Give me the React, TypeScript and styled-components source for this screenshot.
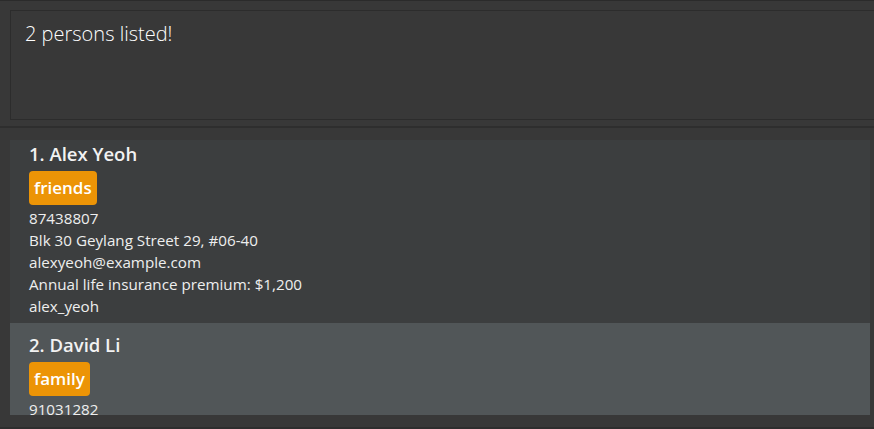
import React from "react";
import styled, { createGlobalStyle } from "styled-components";

const Global = createGlobalStyle`
  html, body { margin: 0; padding: 0; background: #383838; }
  body { width: 874px; height: 429px; overflow: hidden; }
  #root { height: 429px; }
`;

const Page = styled.div`
  height: 429px;
  display: flex;
  flex-direction: column;
  background: #383838;
  border-top: 1px solid #2b2b2b;
  border-bottom: 2px solid #2e2e2e;
  box-sizing: border-box;
  overflow: hidden;
`;

const ResultPane = styled.div`
  padding: 9px 0 6px 10px;
  border-bottom: 2px solid #2e2e2e;
`;

const ResultBox = styled.div`
  border: 1px solid #2c2c2c;
  border-right: none;
  background: #383838;
  padding: 11px 14px;
  box-sizing: border-box;
  height: 110px;
  font-family: "Open Sans", "Noto Sans", sans-serif;
  font-weight: 300;
  font-size: 20px;
  color: #ffffff;
  line-height: 24px;
`;

const ListPane = styled.div`
  flex: 1;
  padding: 12px 4px 12px 10px;
  display: flex;
  flex-direction: column;
  min-height: 0;
`;

const ListViewport = styled.div`
  flex: 1;
  overflow: hidden;
`;

const ListScroll = styled.div`
  margin-top: -8px;
`;

const Card = styled.div<{ $odd?: boolean }>`
  background: ${(p) => (p.$odd ? "#515658" : "#3c3e3f")};
  padding: 8px 19px 6px;
  display: flex;
  flex-direction: column;
  align-items: flex-start;
`;

const Name = styled.div`
  font-family: "Open Sans", "Noto Sans", sans-serif;
  font-weight: 600;
  font-size: 18.5px;
  line-height: 28px;
  color: #f2f2f2;
`;

const Tags = styled.div`
  display: flex;
  gap: 6px;
  margin: 3px 0 2px;
`;

const Tag = styled.span`
  background: #ec9406;
  color: #ffffff;
  border-radius: 4px;
  padding: 0 5px;
  height: 34px;
  line-height: 34px;
  font-family: "Open Sans", "Noto Sans", sans-serif;
  font-weight: 600;
  font-size: 17px;
`;

const Field = styled.div`
  font-family: "Open Sans", "Noto Sans", sans-serif;
  font-size: 15.2px;
  line-height: 22px;
  color: #eeeeee;
  white-space: nowrap;
`;

type Person = {
  name: string;
  tags: string[];
  phone: string;
  address: string;
  email: string;
  note: string;
  handle: string;
};

const people: Person[] = [
  {
    name: "Alex Yeoh",
    tags: ["friends"],
    phone: "87438807",
    address: "Blk 30 Geylang Street 29, #06-40",
    email: "alexyeoh@example.com",
    note: "Annual life insurance premium: $1,200",
    handle: "alex_yeoh",
  },
  {
    name: "David Li",
    tags: ["family"],
    phone: "91031282",
    address: "Blk 436 Serangoon Gardens Street 26, #16-43",
    email: "lidavid@example.com",
    note: "",
    handle: "david_li",
  },
];

export default function App() {
  return (
    <>
      <Global />
      <Page>
        <ResultPane>
          <ResultBox>2 persons listed!</ResultBox>
        </ResultPane>
        <ListPane>
          <ListViewport>
            <ListScroll>
              {people.map((p, i) => (
                <Card key={p.name} $odd={i % 2 === 1}>
                  <Name>
                    {i + 1}. {p.name}
                  </Name>
                  <Tags>
                    {p.tags.map((t) => (
                      <Tag key={t}>{t}</Tag>
                    ))}
                  </Tags>
                  <Field>{p.phone}</Field>
                  <Field>{p.address}</Field>
                  <Field>{p.email}</Field>
                  {p.note && <Field>{p.note}</Field>}
                  <Field>{p.handle}</Field>
                </Card>
              ))}
            </ListScroll>
          </ListViewport>
        </ListPane>
      </Page>
    </>
  );
}
